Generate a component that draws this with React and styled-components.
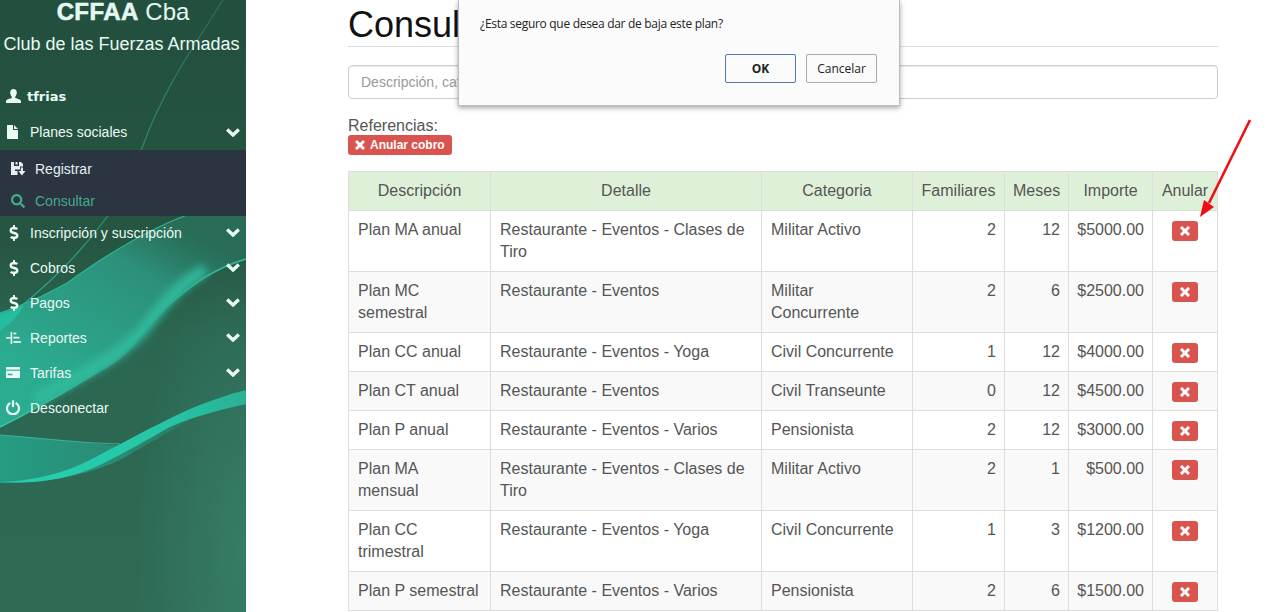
import styled, { createGlobalStyle } from "styled-components";
import { FaSearch, FaDollarSign } from "react-icons/fa";

const plans = [
  ["Plan MA anual", "Restaurante - Eventos - Clases de Tiro", "Militar Activo", 2, 12, "$5000.00"],
  ["Plan MC semestral", "Restaurante - Eventos", "Militar Concurrente", 2, 6, "$2500.00"],
  ["Plan CC anual", "Restaurante - Eventos - Yoga", "Civil Concurrente", 1, 12, "$4000.00"],
  ["Plan CT anual", "Restaurante - Eventos", "Civil Transeunte", 0, 12, "$4500.00"],
  ["Plan P anual", "Restaurante - Eventos - Varios", "Pensionista", 2, 12, "$3000.00"],
  ["Plan MA mensual", "Restaurante - Eventos - Clases de Tiro", "Militar Activo", 2, 1, "$500.00"],
  ["Plan CC trimestral", "Restaurante - Eventos - Yoga", "Civil Concurrente", 1, 3, "$1200.00"],
  ["Plan P semestral", "Restaurante - Eventos - Varios", "Pensionista", 2, 6, "$1500.00"],
];

const columns = [
  ["Descripción", 142],
  ["Detalle", 271],
  ["Categoria", 151],
  ["Familiares", 92],
  ["Meses", 64],
  ["Importe", 84],
  ["Anular", 65],
];

function UserIcon() {
  return (
    <svg width="15" height="14" viewBox="0 0 15 14" fill="currentColor">
      <path d="M7.5 0C9.6 0 10.8 1.5 10.8 3.6C10.8 5.4 10 6.9 9.2 7.7V9C11 9.6 15 10.4 15 12.2V14H0V12.2C0 10.4 4 9.6 5.8 9V7.7C5 6.9 4.2 5.4 4.2 3.6C4.2 1.5 5.4 0 7.5 0Z" />
    </svg>
  );
}

function FileIcon() {
  return (
    <svg width="11" height="14" viewBox="0 0 11 14" fill="currentColor">
      <path d="M0 0H6V5H11V14H0Z" />
      <path d="M7 0L11 4H7Z" />
    </svg>
  );
}

function SaveIcon() {
  return (
    <svg width="15" height="15" viewBox="0 0 15 15" fill="currentColor">
      <path d="M0 1H3V5H8V1H10L12 3V5.5H9V8.5H4V10H6.5V14H0Z" />
      <rect x="4.5" y="1" width="2" height="2.6" />
      <path d="M9.8 6.5H12V10H14.5L10.9 14.5L7.4 10H9.8Z" />
    </svg>
  );
}

function ReportIcon() {
  return (
    <svg width="15" height="12" viewBox="0 0 15 12" fill="currentColor">
      <rect x="4.6" y="0" width="1.6" height="12" />
      <rect x="0" y="5.2" width="4.6" height="1.4" />
      <rect x="7.4" y="0.6" width="3" height="1.7" />
      <rect x="7.4" y="4.8" width="6" height="1.7" />
      <rect x="7.4" y="9.2" width="7.6" height="1.7" />
    </svg>
  );
}

function CardIcon() {
  return (
    <svg width="14" height="11" viewBox="0 0 14 11" fill="currentColor">
      <rect x="0" y="0" width="14" height="2.6" />
      <path fillRule="evenodd" d="M0 3.8H14V11H0ZM1.8 6.8V8.2H6.5V6.8Z" />
    </svg>
  );
}

function PowerIcon() {
  return (
    <svg width="14" height="15" viewBox="0 0 14 15" fill="none" stroke="currentColor" strokeWidth="2.2">
      <path d="M4.3 2.9A6 6 0 1 0 9.7 2.9" />
      <path d="M7 0.4V7" />
    </svg>
  );
}

function ChevronIcon() {
  return (
    <svg width="14" height="9" viewBox="0 0 14 9" fill="none" stroke="currentColor" strokeWidth="3.4">
      <path d="M1.2 1.6L7 7L12.8 1.6" />
    </svg>
  );
}

function CrossIcon() {
  return (
    <svg width="10" height="10" viewBox="0 0 10 10" fill="none" stroke="currentColor" strokeWidth="3">
      <path d="M1 1L9 9M9 1L1 9" />
    </svg>
  );
}

function Waves() {
  return (
    <WaveLayer viewBox="0 0 246 612" preserveAspectRatio="none">
      <defs>
        <linearGradient id="band" gradientUnits="userSpaceOnUse" x1="175" y1="222" x2="70" y2="390">
          <stop offset="0" stopColor="#2a7a65" stopOpacity="0.6" />
          <stop offset="0.3" stopColor="#2d9079" />
          <stop offset="1" stopColor="#2bab90" />
        </linearGradient>
        <linearGradient id="lower" x1="0" y1="0" x2="1" y2="0">
          <stop offset="0" stopColor="#279c83" />
          <stop offset="0.6" stopColor="#2a8b74" />
          <stop offset="1" stopColor="#2b7560" />
        </linearGradient>
        <linearGradient id="edge" gradientUnits="userSpaceOnUse" x1="246" y1="258" x2="0" y2="427">
          <stop offset="0" stopColor="#2cc0a2" />
          <stop offset="0.45" stopColor="#2aa58b" />
          <stop offset="1" stopColor="#36c6a9" />
        </linearGradient>
        <linearGradient id="thin" gradientUnits="userSpaceOnUse" x1="223" y1="0" x2="20" y2="307">
          <stop offset="0" stopColor="#2d6f5a" />
          <stop offset="0.6" stopColor="#2f8f78" />
          <stop offset="1" stopColor="#2ab598" />
        </linearGradient>
        <linearGradient id="bright" gradientUnits="userSpaceOnUse" x1="246" y1="395" x2="0" y2="483">
          <stop offset="0" stopColor="#2ab095" />
          <stop offset="0.3" stopColor="#26c4a5" />
          <stop offset="1" stopColor="#25d0ae" />
        </linearGradient>
        <filter id="soft">
          <feGaussianBlur stdDeviation="0.7" />
        </filter>
        <filter id="softer">
          <feGaussianBlur stdDeviation="4" />
        </filter>
      </defs>
      {/* teal ribbon, from the right edge down to the left edge */}
      <path
        d="M246 215L187 215C160 225 120 245 67 283C45 295 25 305 0 313V427C45 405 85 380 113 363C135 348 150 325 167 307C190 285 215 268 246 259Z"
        fill="url(#band)"
      />
      <path
        d="M205 270C180 283 160 308 145 328C125 353 85 373 35 400"
        fill="none"
        stroke="#30bc9f"
        strokeWidth="11"
        filter="url(#softer)"
      />
      <path
        d="M246 259C215 268 190 285 167 307C150 325 135 348 113 363C85 380 45 405 0 427"
        fill="none"
        stroke="url(#edge)"
        strokeWidth="1.6"
        filter="url(#soft)"
      />
      {/* lower ribbon with its bright edge */}
      <path
        d="M0 435C40 438 90 443 125 446C150 436 175 425 200 414L120 460C80 478 40 483 0 483Z"
        fill="url(#lower)"
        filter="url(#soft)"
      />
      <path
        d="M246 390C215 398 190 408 165 421C140 433 115 447 90 460C60 475 30 481 0 482C40 484 70 479 100 465C125 453 150 438 170 427C195 416 220 410 246 404Z"
        fill="url(#bright)"
        filter="url(#soft)"
      />
      <path d="M0 435C40 438 80 443 120 444" fill="none" stroke="#3fbfa5" strokeWidth="0.8" />
      {/* thin lines */}
      <path d="M223 0C195 45 165 85 142 148C130 175 118 198 107 217C90 240 60 275 20 307L0 328" fill="none" stroke="url(#thin)" strokeWidth="1.1" />
      <path d="M187 215C160 225 120 245 67 283C45 295 25 305 0 313" fill="none" stroke="#2ab598" strokeWidth="1.3" />
      <path d="M0 314C10 312 20 308 24 305C16 320 8 324 0 331Z" fill="#28bd9f" filter="url(#soft)" />
    </WaveLayer>
  );
}

function MenuEntry({ icon, label, open }) {
  return (
    <MenuItem>
      <IconSlot>{icon}</IconSlot>
      {label}
      {open && (
        <Chevron>
          <ChevronIcon />
        </Chevron>
      )}
    </MenuItem>
  );
}

export default function App() {
  return (
    <>
      <GlobalStyle />
      <Page>
        <Sidebar>
          <Waves />
          <Brand>
            <b>CFFAA</b> Cba
          </Brand>
          <Club>Club de las Fuerzas Armadas</Club>
          <UserRow>
            <UserIcon />
            tfrias
          </UserRow>
          <MenuItem $first>
            <IconSlot $nudge={1}><FileIcon /></IconSlot>
            Planes sociales
            <Chevron><ChevronIcon /></Chevron>
          </MenuItem>
          <SubMenu>
            <SubItem>
              <IconSlot><SaveIcon /></IconSlot>
              Registrar
            </SubItem>
            <SubItem $active>
              <IconSlot><FaSearch size={14} /></IconSlot>
              Consultar
            </SubItem>
          </SubMenu>
          <MenuEntry icon={<FaDollarSign size={16} />} label="Inscripción y suscripción" open />
          <MenuEntry icon={<FaDollarSign size={16} />} label="Cobros" open />
          <MenuEntry icon={<FaDollarSign size={16} />} label="Pagos" open />
          <MenuEntry icon={<ReportIcon />} label="Reportes" open />
          <MenuEntry icon={<CardIcon />} label="Tarifas" open />
          <MenuEntry icon={<PowerIcon />} label="Desconectar" />
        </Sidebar>

        <Main>
          <Title>Consultar</Title>
          <SearchInput placeholder="Descripción, categoria" readOnly />
          <Refs>Referencias:</Refs>
          <Badge>
            <CrossIcon /> Anular cobro
          </Badge>
          <Table>
            <colgroup>
              {columns.map(([name, width]) => (
                <Col key={name} $w={width} />
              ))}
            </colgroup>
            <thead>
              <tr>
                {columns.map(([name]) => (
                  <Th key={name}>{name}</Th>
                ))}
              </tr>
            </thead>
            <tbody>
              {plans.map((p) => (
                <Row key={p[0]}>
                  <Td>{p[0]}</Td>
                  <Td>{p[1]}</Td>
                  <Td>{p[2]}</Td>
                  <Td $right>{p[3]}</Td>
                  <Td $right>{p[4]}</Td>
                  <Td $right>{p[5]}</Td>
                  <Td>
                    <CancelButton>
                      <CrossIcon />
                    </CancelButton>
                  </Td>
                </Row>
              ))}
            </tbody>
          </Table>
        </Main>

        <Dialog>
          <DialogText>¿Esta seguro que desea dar de baja este plan?</DialogText>
          <DialogActions>
            <DialogButton $primary>OK</DialogButton>
            <DialogButton>Cancelar</DialogButton>
          </DialogActions>
        </Dialog>

        <Arrow viewBox="0 0 60 110">
          <path d="M52 4L11 87" stroke="#ee0f14" strokeWidth="2.6" fill="none" />
          <path d="M2 101L6 84L16 91Z" fill="#ee0f14" />
        </Arrow>
      </Page>
    </>
  );
}

const GlobalStyle = createGlobalStyle`
  html, body {
    margin: 0;
    height: 100%;
    overflow: hidden;
    background: #fff;
  }
  * {
    box-sizing: border-box;
  }
`;
const Page = styled.div`
  position: relative;
  display: flex;
  width: 100%;
  height: 612px;
  overflow: hidden;
  font-family: "Liberation Sans", Arial, sans-serif;
`;
const Sidebar = styled.aside`
  position: relative;
  flex: 0 0 246px;
  height: 612px;
  color: #eafaf5;
  background: radial-gradient(ellipse 110px 300px at 100% 90%, rgba(56, 132, 108, 0.75), rgba(56, 132, 108, 0)),
    linear-gradient(180deg, #234f3e 0px, #265642 240px, #2b6651 340px, #2f6a55 612px);
  font-size: 14px;
  & > *:not(svg) {
    position: relative;
  }
`;
const WaveLayer = styled.svg`
  position: absolute;
  top: 0;
  left: 0;
  width: 246px;
  height: 612px;
`;
const Brand = styled.div`
  height: 24px;
  font-size: 24px;
  line-height: 23px;
  text-align: center;
  white-space: nowrap;
  color: #e6f8f3;
  b {
    letter-spacing: 0.4px;
    -webkit-text-stroke: 0.6px #e6f8f3;
  }
`;
const Club = styled.div`
  margin-top: 10px;
  padding-right: 3px;
  height: 20px;
  font-size: 18px;
  line-height: 20px;
  text-align: center;
  white-space: nowrap;
`;
const UserRow = styled.div`
  display: flex;
  align-items: center;
  gap: 6px;
  margin-top: 32px;
  padding-left: 6px;
  height: 20px;
  font-family: "DejaVu Sans", sans-serif;
  font-size: 13px;
  font-weight: 700;
`;
const MenuItem = styled.div`
  display: flex;
  align-items: center;
  height: ${(p) => (p.$first ? "36px" : "35px")};
  margin-top: ${(p) => (p.$first ? "8px" : "0")};
  padding-left: 6px;
  font-size: 14px;
  white-space: nowrap;
`;
const IconSlot = styled.span`
  display: inline-flex;
  align-items: center;
  width: 24px;
  flex: none;
  padding-left: ${(p) => p.$nudge || 0}px;
`;
const Chevron = styled.span`
  display: inline-flex;
  margin-left: auto;
  margin-right: 6px;
`;
const SubMenu = styled.div`
  display: flex;
  flex-direction: column;
  gap: 1px;
  height: 66px;
  padding-top: 3px;
  margin-bottom: -1px;
  background: #2a3541;
`;
const SubItem = styled.div`
  display: flex;
  align-items: center;
  height: 32px;
  padding-left: 11px;
  font-size: 14px;
  color: ${(p) => (p.$active ? "#45a98c" : "#e8eef0")};
`;
const Main = styled.main`
  flex: 1;
  min-width: 0;
  padding: 5px 54px 0 102px;
  color: #555;
  font-size: 16px;
`;
const Title = styled.h1`
  margin: 0 0 18px;
  height: 42px;
  font-size: 36px;
  line-height: 40px;
  font-weight: 400;
  color: #111;
  border-bottom: 1px solid #ddd;
`;
const SearchInput = styled.input`
  display: block;
  width: 100%;
  height: 34px;
  padding: 6px 12px;
  font-family: inherit;
  font-size: 14px;
  color: #555;
  background: #fff;
  border: 1px solid #ccc;
  border-radius: 4px;
  box-shadow: inset 0 1px 1px rgba(0, 0, 0, 0.075);
  outline: none;
  &::placeholder {
    color: #999;
  }
`;
const Refs = styled.div`
  margin-top: 17px;
  height: 19px;
  line-height: 20px;
  color: #555;
`;
const Badge = styled.span`
  display: inline-flex;
  align-items: center;
  gap: 5px;
  height: 20px;
  padding: 0 7px;
  font-size: 12px;
  font-weight: 700;
  color: #fff;
  background: #d9534f;
  border-radius: 3px;
`;
const Table = styled.table`
  margin-top: 16px;
  width: 869px;
  table-layout: fixed;
  border-collapse: collapse;
  border: 1px solid #ddd;
`;
const Col = styled.col`
  width: ${(p) => p.$w}px;
`;
const Th = styled.th`
  padding: 8px;
  height: 39px;
  font-weight: 400;
  line-height: 22px;
  text-align: center;
  color: #555;
  background: #dff0d8;
  border: 1px solid #ddd;
`;
const Row = styled.tr`
  &:nth-child(even) {
    background: #f9f9f9;
  }
`;
const Td = styled.td`
  padding: 8px ${(p) => (p.$right ? "8px" : "10px")} 8px ${(p) => (p.$right ? "8px" : "9px")};
  line-height: 22px;
  vertical-align: top;
  text-align: ${(p) => (p.$right ? "right" : "left")};
  border: 1px solid #ddd;
`;
const CancelButton = styled.div`
  display: flex;
  align-items: center;
  justify-content: center;
  width: 26px;
  height: 20px;
  margin: 2px auto 0;
  color: #fff;
  background: #d9534f;
  border-radius: 3px;
`;
const Dialog = styled.div`
  position: absolute;
  top: 0;
  left: 458px;
  width: 442px;
  height: 106px;
  background: #fbfbfb;
  border: 1px solid #bcbcbc;
  border-top: none;
  box-shadow: 0 2px 5px rgba(0, 0, 0, 0.35);
  font-family: "Open Sans", sans-serif;
`;
const DialogText = styled.div`
  padding: 16px 0 0 21px;
  height: 54px;
  font-size: 12px;
  line-height: 16px;
  letter-spacing: -0.3px;
  color: #222;
`;
const DialogActions = styled.div`
  display: flex;
  justify-content: flex-end;
  gap: 10px;
  padding-right: 22px;
`;
const DialogButton = styled.div`
  display: flex;
  align-items: center;
  justify-content: center;
  width: 71px;
  height: 29px;
  font-size: 12px;
  font-weight: ${(p) => (p.$primary ? 700 : 400)};
  color: #222;
  background: #fafafa;
  border: 1px solid ${(p) => (p.$primary ? "#4d7ab5" : "#aaa")};
  border-radius: 2px;
`;
const Arrow = styled.svg`
  position: absolute;
  left: 1198px;
  top: 116px;
  width: 60px;
  height: 110px;
`;
